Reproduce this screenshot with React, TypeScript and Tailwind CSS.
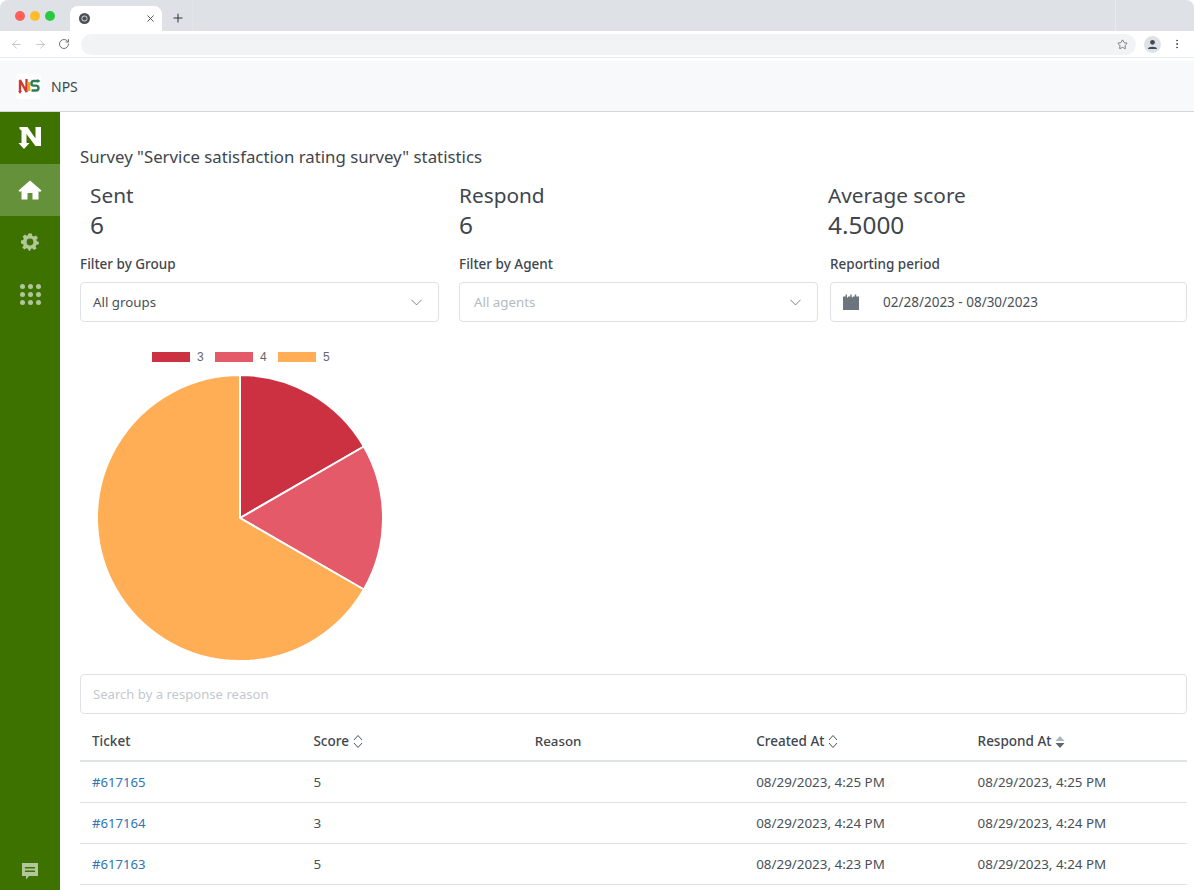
import { ArrowLeft, ArrowRight, RotateCw, Star, X, Plus, ChevronDown, EllipsisVertical } from "lucide-react";

const rows = [
  ["#617165", "5", "08/29/2023, 4:25 PM", "08/29/2023, 4:25 PM"],
  ["#617164", "3", "08/29/2023, 4:24 PM", "08/29/2023, 4:24 PM"],
  ["#617163", "5", "08/29/2023, 4:23 PM", "08/29/2023, 4:24 PM"],
];

function SortIcon({ active }: { active?: boolean }) {
  if (active) {
    return (
      <svg width="10" height="14" viewBox="0 0 10 14" className="ml-1">
        <path d="M5 1 L9.5 6 H0.5 Z" fill="#adb5bd" />
        <path d="M5 13 L9.5 8 H0.5 Z" fill="#5c6670" />
      </svg>
    );
  }
  return (
    <svg width="10" height="15" viewBox="0 0 10 15" className="ml-1" fill="none" stroke="#4b5563" strokeWidth="1">
      <path d="M1 6 L5 1.5 L9 6" />
      <path d="M1 9 L5 13.5 L9 9" />
    </svg>
  );
}

function Stat({ label, value }: { label: string; value: string }) {
  return (
    <div className="w-[369px] shrink-0 text-[#3f464d]">
      <div className="text-[20.8px] leading-[30px]">{label}</div>
      <div className="text-[24.4px] leading-[30px]">{value}</div>
    </div>
  );
}

function Select({ text, muted }: { text: string; muted?: boolean }) {
  return (
    <div className="flex h-10 items-center justify-between rounded border border-[#dee2e6] pl-3 pr-[12px] bg-white">
      <span className={muted ? "pt-px text-[13.3px] text-[#b4bac0] pl-[2px]" : "pt-px text-[13.3px] text-[#495057]"}>{text}</span>
      <ChevronDown size={19} strokeWidth={0.9} className="text-[#495057]" />
    </div>
  );
}

function Label({ children }: { children: string }) {
  return <div className="text-[13.5px] font-medium leading-5 text-[#3f464d] mb-[8px]">{children}</div>;
}

function Pie() {
  const cx = 144;
  const cy = 144;
  const r = 143;
  const pt = (deg: number) => {
    const a = ((deg - 90) * Math.PI) / 180;
    return `${cx + r * Math.cos(a)} ${cy + r * Math.sin(a)}`;
  };
  const slice = (from: number, to: number, fill: string) => (
    <path
      d={`M${cx} ${cy} L${pt(from)} A${r} ${r} 0 ${to - from > 180 ? 1 : 0} 1 ${pt(to)} Z`}
      fill={fill}
      stroke="#fff"
      strokeWidth="2"
    />
  );
  return (
    <svg width="288" height="288" viewBox="0 0 288 288" className="block">
      {slice(0, 60, "#cb3140")}
      {slice(60, 120, "#e45a69")}
      {slice(120, 360, "#ffae56")}
    </svg>
  );
}

function Legend({ color, label }: { color: string; label: string }) {
  return (
    <div className="flex items-center">
      <span className="block h-[10px] w-[38px]" style={{ backgroundColor: color }} />
      <span className="ml-[7px] w-[17px] text-[12px] leading-[12px] text-[#666666]" style={{ fontFamily: "'Liberation Sans', sans-serif" }}>{label}</span>
    </div>
  );
}

function NLogo() {
  return (
    <svg width="24" height="24" viewBox="0 0 24 24">
      <path d="M1.5 1 H9.5 L17.5 12.5 V1 H23 V20 H17.5 L8.5 8 V17 H11.5 L6 23 L0.5 17 H3.5 V4.5 L1.5 3 Z" fill="#fff" />
    </svg>
  );
}

function ChromeIcon() {
  return (
    <svg width="11" height="11" viewBox="0 0 24 24">
      <circle cx="12" cy="12" r="12" fill="#4b4f54" />
      <circle cx="12" cy="12" r="6.5" fill="#c9cbcd" />
      <circle cx="12" cy="12" r="4.5" fill="#4b4f54" />
    </svg>
  );
}

export default function App() {
  return (
    <div className="h-[890px] w-[1194px] overflow-hidden bg-white" style={{ fontFamily: "'Noto Sans', sans-serif" }}>
      {/* Browser tab strip */}
      <div className="flex h-[31px] items-end rounded-t-[8px] bg-[#dee1e6]">
        <div className="flex h-[31px] w-[70px] items-start gap-[5px] pl-[15px] pt-[11px]">
          <span className="h-[10px] w-[10px] rounded-full bg-[#ff5f57]" />
          <span className="h-[10px] w-[10px] rounded-full bg-[#ffbd2e]" />
          <span className="h-[10px] w-[10px] rounded-full bg-[#28ca41]" />
        </div>
        <div className="flex h-[25px] w-[92px] items-center justify-between rounded-t-[8px] bg-white pl-[9px] pr-[6px]">
          <ChromeIcon />
          <X size={11} strokeWidth={2} className="text-[#45494e]" />
        </div>
        <div className="flex h-[25px] w-[30px] items-center justify-center pb-[1px] pl-[3px] pr-px">
          <Plus size={14} strokeWidth={1.8} className="text-[#33373b]" />
        </div>
        <div className="h-[31px] w-px bg-[#e3e5e9]" />
        <div className="ml-auto h-[31px] w-[79px] border-l border-[#e8eaed]" />
      </div>
      {/* Toolbar */}
      <div className="flex h-[27px] items-center bg-white pl-[10px] pr-[11px] border-b border-[#e6e8eb]">
        <ArrowLeft size={13} strokeWidth={1.7} className="text-[#bcc0c4]" />
        <ArrowRight size={13} strokeWidth={1.7} className="ml-[11px] text-[#bcc0c4]" />
        <RotateCw size={12} strokeWidth={1.8} className="ml-[11px] text-[#5f6368]" />
        <div className="ml-[11px] flex h-[21px] w-[1056px] items-center justify-end rounded-full bg-[#f1f3f4] pr-[8px]">
          <Star size={11} strokeWidth={1.5} className="text-[#4b4f54]" />
        </div>
        <div className="ml-[8px] flex h-[17px] w-[17px] items-center justify-center rounded-full bg-[#dfe1e5]">
          <svg width="11" height="11" viewBox="0 0 12 12">
            <circle cx="6" cy="3.6" r="2.6" fill="#3c4a5e" />
            <path d="M1 11 C1 7.5 11 7.5 11 11 Z" fill="#3c4a5e" />
          </svg>
        </div>
        <EllipsisVertical size={12} strokeWidth={2} className="ml-[10px] text-[#4b4f54]" />
      </div>
      {/* App header */}
      <div className="mt-[3px] flex h-[51px] items-center border-b border-[#d4d6d8] bg-[#f8f9fa] pl-4">
        <div className="flex h-[25px] w-[25px] items-center justify-center rounded bg-white">
          <svg width="24" height="18" viewBox="0 0 24 18" fill="none">
            <path d="M3 15 V3 L9.5 15 V2" stroke="#cf3a35" strokeWidth="2.4" />
            <path d="M1.2 14 L3 17 L4.8 14 Z" fill="#cf3a35" />
            <path d="M12 5 V14" stroke="#f3a31f" strokeWidth="2.6" />
            <path d="M21 4 H16.5 Q14.5 4 14.5 6.5 Q14.5 8.6 16.5 8.6 H19 Q21.5 8.6 21.5 11 Q21.5 13.5 19 13.5 H14.5" stroke="#2f7d56" strokeWidth="2.4" />
            <path d="M20.5 2 L23.5 4 L20.5 6 Z" fill="#2f7d56" />
          </svg>
        </div>
        <span className="ml-[10px] text-[14px] text-[#3f464d]">NPS</span>
      </div>
      <div className="flex h-[778px]">
        {/* Sidebar */}
        <aside className="flex w-[60px] shrink-0 flex-col items-center bg-[#3d7200]">
          <div className="flex h-[52px] w-full items-center justify-center pr-px">
            <NLogo />
          </div>
          <div className="flex h-[52px] w-full items-center justify-center bg-[#64913a]">
            <svg width="24" height="20" viewBox="0 0 24 20">
              <path d="M12 0.5 L23.5 10.5 L22 12 L20.5 11 V19.5 H14.5 V13 H9.5 V19.5 H3.5 V11 L2 12 L0.5 10.5 Z" fill="#fff" />
            </svg>
          </div>
          <div className="flex h-[52px] w-full items-center justify-center">
            <svg width="18" height="18" viewBox="0 0 18 18">
              <path
                fillRule="evenodd"
                fill="#b1c799"
                d="M7.2 0.5 H10.8 L11.3 2.8 L13 3.6 L15 2.4 L17 5 L15.4 6.6 L15.9 8.2 L18 9 L17.6 11.6 L15.4 11.8 L14.6 13.4 L15.6 15.4 L13 17 L11.6 15.4 L9.9 15.8 L9 18 H8 L6.9 15.8 L5.2 15.3 L3.4 16.6 L1.2 14.4 L2.6 12.6 L2 11 L0 10.4 V7.4 L2.2 7 L2.8 5.4 L1.6 3.4 L4 1.4 L5.6 2.8 L7 2.3 Z M9 5.6 A3.4 3.4 0 1 0 9 12.4 A3.4 3.4 0 1 0 9 5.6 Z"
              />
            </svg>
          </div>
          <div className="mt-[16px] grid grid-cols-3 gap-x-[3px] gap-y-[3px]">
            {Array.from({ length: 9 }).map((_, i) => (
              <span key={i} className="h-[5px] w-[5px] rounded-full bg-[#b1c799]" />
            ))}
          </div>
          <div className="mt-auto mb-[10px]">
            <svg width="18" height="18" viewBox="0 0 18 18">
              <path fillRule="evenodd" fill="#b1c799" d="M1 1 H17 V14 H8 L5 17.5 V14 H1 Z M4 5 V6.5 H14 V5 Z M4 8.5 V10 H14 V8.5 Z" />
            </svg>
          </div>
        </aside>
        {/* Main */}
        <main className="flex-1 min-w-0 pl-5 pr-[7px]">
          <h1 className="mt-[33px] text-[16.8px] font-normal leading-6 text-[#3f464d]">
            Survey "Service satisfaction rating survey" statistics
          </h1>
          <div className="mt-[11px] flex pl-[10px]">
            <Stat label="Sent" value="6" />
            <Stat label="Respond" value="6" />
            <Stat label="Average score" value="4.5000" />
          </div>
          <div className="mt-[14px] flex">
            <div className="w-[359px]">
              <Label>Filter by Group</Label>
              <Select text="All groups" />
            </div>
            <div className="ml-5 w-[359px]">
              <Label>Filter by Agent</Label>
              <Select text="All agents" muted />
            </div>
            <div className="ml-3 w-[357px]">
              <Label>Reporting period</Label>
              <div className="flex h-10 items-center rounded border border-[#dee2e6] pl-3">
                <svg width="16" height="16" viewBox="0 0 16 16">
                  <path fill="#6c757d" d="M0 2.5 H2.6 V0.5 H4 V3.5 H5 V2.5 H7.3 V0.5 H8.7 V3.5 H9.7 V2.5 H11.8 V0.5 H13.2 V2.5 H16 V16 H0 Z" />
                </svg>
                <span className="ml-6 text-[13.5px] text-[#495057]">02/28/2023 - 08/30/2023</span>
              </div>
            </div>
          </div>
          <div className="mt-[29px] flex h-[12px] items-center pl-[72px] gap-[1px]">
            <Legend color="#cb3140" label="3" />
            <Legend color="#e45a69" label="4" />
            <Legend color="#ffae56" label="5" />
          </div>
          <div className="mt-[11px] pl-[16px]">
            <Pie />
          </div>
          <div className="mt-[12px] flex h-10 items-center rounded border border-[#dee2e6] pl-3">
            <span className="pt-px text-[13.1px] text-[#c3c9cf]">Search by a response reason</span>
          </div>
          <div className="mt-[7px] grid h-[41px] grid-cols-5 items-center border-b-2 border-[#dee2e6] pt-[2px] text-[13.5px] font-medium text-[#3f464d]">
            <div className="pl-3">Ticket</div>
            <div className="flex items-center pl-3">Score<SortIcon /></div>
            <div className="pl-3 text-[13.3px]">Reason</div>
            <div className="flex items-center pl-3">Created At<SortIcon /></div>
            <div className="flex items-center pl-3">Respond At<SortIcon active /></div>
          </div>
          {rows.map((r) => (
            <div key={r[0]} className="grid h-[41px] grid-cols-5 items-center border-b border-[#dee2e6] text-[13.4px] text-[#495057]">
              <div className="pl-3 pt-px text-[13.1px] text-[#2f74b5]">{r[0]}</div>
              <div className="pl-3">{r[1]}</div>
              <div className="pl-3" />
              <div className="pl-3">{r[2]}</div>
              <div className="pl-3">{r[3]}</div>
            </div>
          ))}
        </main>
      </div>
    </div>
  );
}
